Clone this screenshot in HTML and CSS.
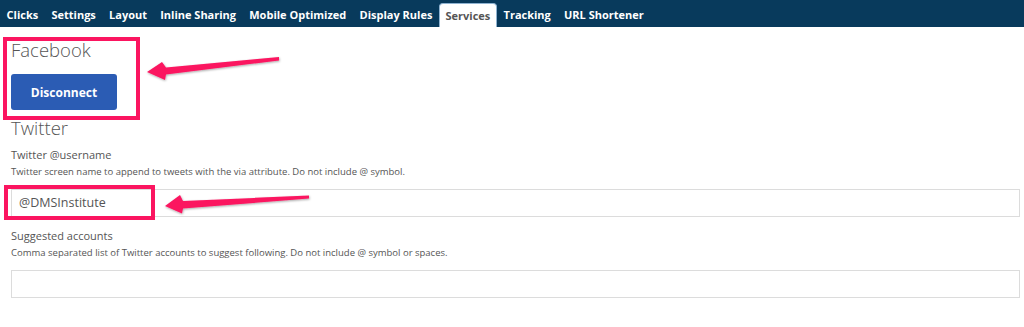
FILE: index.html
```html
<!DOCTYPE html>
<html>
<head>
<meta charset="utf-8">
<link rel="stylesheet" href="styles.css">
</head>
<body>
<nav class="tabs">
  <a class="tab">Clicks</a>
  <a class="tab">Settings</a>
  <a class="tab">Layout</a>
  <a class="tab">Inline Sharing</a>
  <a class="tab">Mobile Optimized</a>
  <a class="tab">Display Rules</a>
  <a class="tab active">Services</a>
  <a class="tab">Tracking</a>
  <a class="tab">URL Shortener</a>
</nav>
<main class="content">
  <h2 class="heading fb">Facebook</h2>
  <button class="btn">Disconnect</button>
  <h2 class="heading tw">Twitter</h2>
  <div class="field">
    <label class="label">Twitter @username</label>
    <p class="desc">Twitter screen name to append to tweets with the via attribute. Do not include @ symbol.</p>
    <div class="input">@DMSInstitute</div>
  </div>
  <div class="field">
    <label class="label">Suggested accounts</label>
    <p class="desc">Comma separated list of Twitter accounts to suggest following. Do not include @ symbol or spaces.</p>
    <div class="input"></div>
  </div>
</main>
<div class="mark mark-fb"></div>
<div class="mark mark-tw"></div>
<svg class="arrows" width="1024" height="327" viewBox="0 0 1024 327">
  <defs>
    <filter id="sh" x="-10%" y="-50%" width="120%" height="200%">
      <feDropShadow dx="0.5" dy="1" stdDeviation="0.8" flood-color="#000" flood-opacity="0.35"/>
    </filter>
  </defs>
  <polygon filter="url(#sh)" fill="#fb1560" points="279,57 279,60.5 166,74.5 165,80 147,72 162,62 166,67.5"/>
  <polygon filter="url(#sh)" fill="#fb1560" points="309,195.5 309,198.5 183,208.5 182,213.5 165,206 180,195 183,201"/>
</svg>
</body>
</html>
```
FILE: styles.css
```css
* { box-sizing: border-box; }
html, body { margin: 0; padding: 0; background: #fff; }
body {
  font-family: "Open Sans", "Noto Sans", sans-serif;
  color: #555;
  position: relative;
  width: 1024px;
  height: 327px;
  overflow: hidden;
}
.tabs {
  display: flex;
  align-items: flex-end;
  height: 27px;
  background: #083a5c;
  padding-left: 0;
}
.tab {
  display: block;
  color: #fff;
  font-weight: 700;
  font-size: 11px;
  line-height: 23px;
  padding: 0 6.6px;
  height: 24px;
}
.tab.active {
  background: #fff;
  color: #555;
  border: 1px solid #8fb3d1;
  border-bottom: none;
  border-radius: 4px 4px 0 0;
  padding: 0 5.6px;
}
.content {
  padding: 0 4px 0 11px;
}
.heading {
  margin: 0;
  font-weight: 300;
  font-size: 18.5px;
  line-height: 24px;
  color: #555;
}
.fb { margin-top: 11px; }
.btn {
  display: block;
  margin-top: 12px;
  width: 106px;
  height: 36px;
  border: none;
  border-radius: 3px;
  background: #2b5cb4;
  color: #fff;
  font-family: "Open Sans", "Noto Sans", sans-serif;
  font-weight: 700;
  font-size: 12px;
  padding: 0;
}
.tw { margin-top: 6px; }
.field { display: flex; flex-direction: column; }
.label {
  display: block;
  margin-top: 6px;
  font-size: 11px;
  line-height: 18px;
  color: #555;
}
.desc {
  margin: 0;
  font-size: 9.5px;
  line-height: 16px;
  color: #555;
}
.input {
  margin-top: 9px;
  height: 28px;
  border: 1px solid #dcdcdc;
  font-size: 12.5px;
  line-height: 26px;
  padding-left: 7px;
  color: #555;
}
.field + .field .label { margin-top: 10px; }
.mark {
  position: absolute;
  border: 4px solid #fb1560;
}
.mark-fb { left: 3px; top: 37px; width: 137px; height: 83px; }
.mark-tw { left: 4px; top: 185px; width: 151px; height: 35px; }
.arrows { position: absolute; left: 0; top: 0; pointer-events: none; }
```
